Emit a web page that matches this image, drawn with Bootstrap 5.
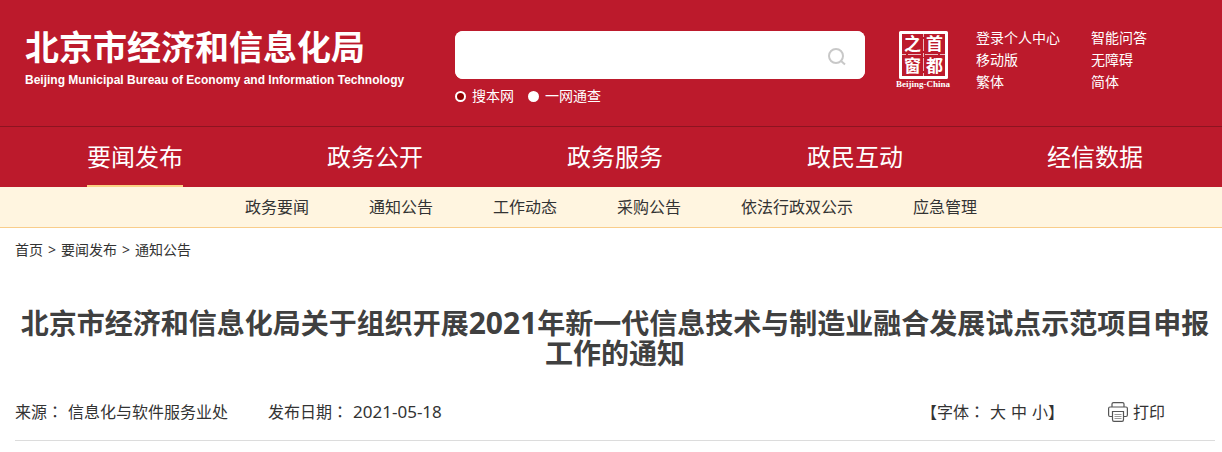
<!DOCTYPE html>
<html lang="zh-CN">
<head>
<meta charset="utf-8">
<meta name="viewport" content="width=device-width, initial-scale=1">
<title>北京市经济和信息化局</title>
<link href="https://cdn.jsdelivr.net/npm/bootstrap@5.3.0/dist/css/bootstrap.min.css" rel="stylesheet">
<style>
body{font-family:"Noto Sans","Noto Sans CJK SC",sans-serif;font-size:16px;line-height:24px;color:#333;background:#fff}
a{color:inherit;text-decoration:none}
.site-head,.main-nav{background:#bc1a2c;color:#fff}
.wrap{padding-left:15px;padding-right:7px}
.head-grid{display:grid;grid-template-columns:440fr 441fr 319fr;padding-top:30px;padding-bottom:20px;border-bottom:1px solid #8d1421}
.brand{padding-left:10px}
.brand-cn{font-size:34px;line-height:34px;font-weight:700}
.brand-en{font-family:"Liberation Sans",sans-serif;font-size:12px;line-height:16px;font-weight:700;margin-top:8px}
.search-form{max-width:410px}
.search-box{height:48px;margin-top:1px;background:#fff;border-radius:8px;overflow:hidden}
.search-box input{border:0;box-shadow:none!important}
.search-box button{width:56px;border:0}
.scope{gap:14px;font-size:14px;line-height:20px;margin-top:7px}
.scope input{appearance:none;width:11px;height:11px;margin:0 6px 0 0;border-radius:50%;background:#fff;border:2px solid #fff}
.scope input:checked{background:#8b0000}
.quick{display:grid;grid-template-columns:115px auto;align-content:start;font-size:14px;line-height:22px;margin:-3px 0 0 25px}
.seal text{font-family:"Liberation Serif","Noto Sans CJK SC",serif;fill:#fff}
.main-nav a{font-size:24px;line-height:56px;height:60px;padding-top:2px;border-bottom:2px solid transparent}
.main-nav a.active{border-color:#fbd183}
.sub-nav{background:#fff5e0;border-bottom:1px solid #f9cd8a;gap:60px;line-height:40px}
.crumbs{gap:5px;font-size:14px;line-height:20px;padding-top:12px}
.headline{font-size:28px;line-height:30px;font-weight:700;color:#404040;margin:48px 0 0}
.year{font-size:30px}
.meta{margin-top:32px;padding-bottom:16px;border-bottom:1px solid #dcdcdc}
.colon{font-family:"Noto Sans CJK TC",sans-serif;line-height:16px}
.published{margin-left:40px}
.date{font-size:17px}
.gap-text{gap:5px}
.print{margin:0 50px 0 44px}
.meta button{color:inherit;background:none;border:0;padding:0}
</style>
</head>
<body>
<header class="site-head">
  <div class="wrap head-grid">
    <a class="brand" href="#"><div class="brand-cn text-nowrap">北京市经济和信息化局</div><div class="brand-en text-nowrap">Beijing Municipal Bureau of Economy and Information Technology</div></a>
    <form class="search-form">
      <div class="search-box d-flex">
        <input class="form-control h-100" type="text" aria-label="搜索">
        <button class="bg-white p-0 flex-shrink-0" type="button" aria-label="搜索"><svg width="18" height="18" viewBox="0 0 18 18" fill="none" stroke="#c8c8c8" stroke-width="2"><circle cx="8" cy="8" r="7"/><path d="M12.5 12.5 17 16.500"/></svg></button>
      </div>
      <div class="scope d-flex">
        <label class="d-flex align-items-center"><input type="radio" name="scope" checked>搜本网</label>
        <label class="d-flex align-items-center"><input type="radio" name="scope">一网通查</label>
      </div>
    </form>
    <div class="d-flex">
      <a href="#" aria-label="首都之窗"><svg class="seal d-block" width="55" height="60" viewBox="0 0 55 60">
        <path fill="none" stroke="#fff" stroke-width="3" stroke-linejoin="round" d="M4.500 2.500h46v45h-46z"/>
        <path fill="none" stroke="#fff" stroke-opacity=".7" stroke-width="1" d="M27.500 3v4M27.500 9v12M27.500 23v4M27.500 28v13M27.500 43v4M6 24.500h4M12 24.500h13M29 24.500h13M44 24.500h5"/>
        <g font-size="17" font-weight="700"><text x="8" y="20">之</text><text x="30" y="20">首</text><text x="8" y="42">窗</text><text x="30" y="42">都</text></g>
        <text x="0" y="57" font-size="9" font-weight="700">Beijing-China</text></svg></a>
      <nav class="quick text-nowrap"><a href="#">登录个人中心</a><a href="#">智能问答</a><a href="#">移动版</a><a href="#">无障碍</a><a href="#">繁体</a><a href="#">简体</a></nav>
    </div>
  </div>
</header>
<nav class="main-nav">
  <div class="wrap"><div class="row g-0 text-nowrap">
    <div class="col d-flex justify-content-center"><a class="active" href="#">要闻发布</a></div>
    <div class="col d-flex justify-content-center"><a href="#">政务公开</a></div>
    <div class="col d-flex justify-content-center"><a href="#">政务服务</a></div>
    <div class="col d-flex justify-content-center"><a href="#">政民互动</a></div>
    <div class="col d-flex justify-content-center"><a href="#">经信数据</a></div>
  </div></div>
</nav>
<nav class="sub-nav d-flex justify-content-center text-nowrap"><a href="#">政务要闻</a><a href="#">通知公告</a><a href="#">工作动态</a><a href="#">采购公告</a><a href="#">依法行政双公示</a><a href="#">应急管理</a></nav>
<main class="wrap">
  <nav class="crumbs d-flex"><a href="#">首页</a><span>&gt;</span><a href="#">要闻发布</a><span>&gt;</span><a href="#">通知公告</a></nav>
  <h1 class="headline text-center">北京市经济和信息化局关于组织开展<span class="year">2021</span>年新一代信息技术与制造业融合发展试点示范项目申报工作的通知</h1>
  <div class="meta d-flex text-nowrap">
    <div class="d-flex gap-text"><span>来源<span class="colon" lang="zh-TW">：</span></span><span>信息化与软件服务业处</span></div>
    <div class="d-flex gap-text me-auto published"><span>发布日期<span class="colon" lang="zh-TW">：</span></span><span class="date">2021-05-18</span></div>
    <div class="d-flex gap-text"><span>【字体<span class="colon" lang="zh-TW">：</span></span><button type="button">大</button><button type="button">中</button><span><button type="button">小</button>】</span></div>
    <button class="print d-flex align-items-center gap-text" type="button"><svg width="20" height="20" viewBox="0 0 20 20" fill="none" stroke="#555" stroke-width="1.200"><path d="M4 5V2Q4 .6 5.500.6h9Q16 .6 16 2v3M4 14.500H2Q.6 14.500.6 13V6.500Q.6 5 2 5h16q1.400 0 1.400 1.500V13q0 1.500-1.400 1.500h-2M4.500 9.500h11v8q0 1.900-1.500 1.900H6q-1.500 0-1.500-1.900z"/><path stroke="#999" d="M6.500 12.500h7M6.500 14.500h7M6.500 16.500h7"/></svg>打印</button>
  </div>
</main>
<script src="https://cdn.jsdelivr.net/npm/bootstrap@5.3.0/dist/js/bootstrap.bundle.min.js"></script>
</body>
</html>
